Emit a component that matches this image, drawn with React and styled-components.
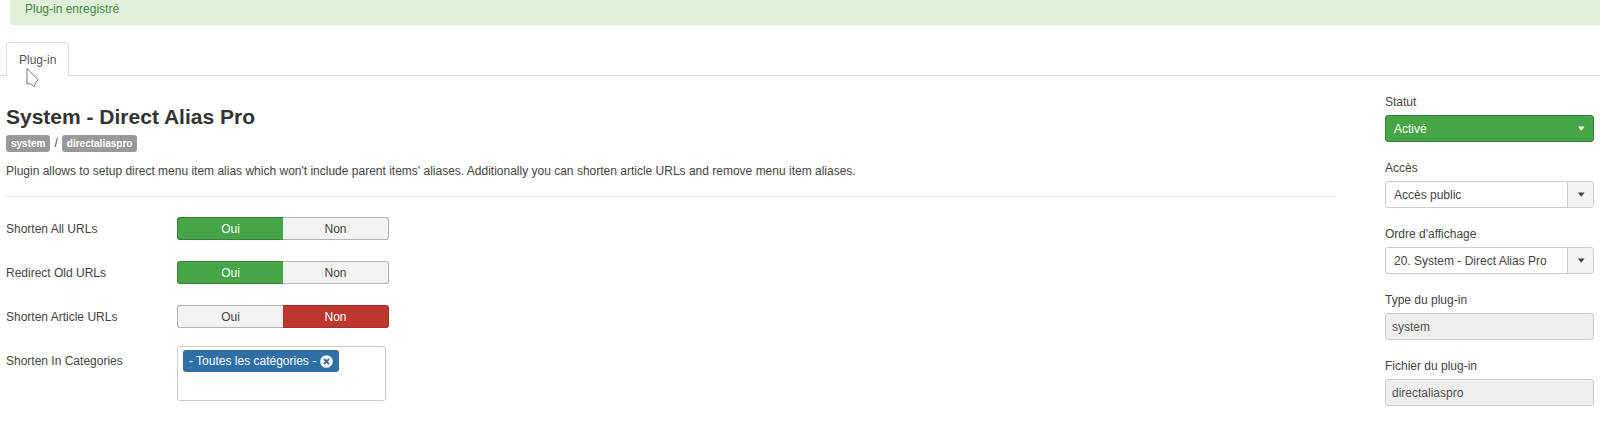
import React, { useState } from "react";
import styled, { createGlobalStyle, css } from "styled-components";

const RADIO_FIELDS = [
  { name: "shorten_all", label: "Shorten All URLs", value: "1" },
  { name: "redirect_old", label: "Redirect Old URLs", value: "1" },
  { name: "shorten_article", label: "Shorten Article URLs", value: "0" },
];

const YesNo = ({ name, label, value }) => {
  const [current, setCurrent] = useState(value);

  return (
    <Row as="fieldset">
      <RowLabel as="legend">{label}</RowLabel>
      <Toggle>
        <Option $active={current === "1"} $color="green">
          <Radio
            name={name}
            checked={current === "1"}
            onChange={() => setCurrent("1")}
          />
          Oui
        </Option>
        <Option $active={current === "0"} $color="red">
          <Radio
            name={name}
            checked={current === "0"}
            onChange={() => setCurrent("0")}
          />
          Non
        </Option>
      </Toggle>
    </Row>
  );
};

const SelectField = ({ id, label, options, green }) => (
  <Field>
    <FieldLabel htmlFor={id}>{label}</FieldLabel>
    <SelectWrapper>
      <Select id={id} $green={green}>
        {options.map((option) => (
          <option key={option}>{option}</option>
        ))}
      </Select>
      <Arrow $green={green}>
        <svg width="8" height="6" viewBox="0 0 8 6" aria-hidden="true">
          <path d="M1 0.500h6.500L4.500 4.500h-0.500z" fill="currentColor" />
        </svg>
      </Arrow>
    </SelectWrapper>
  </Field>
);

const TextField = ({ id, label, value }) => (
  <Field>
    <FieldLabel htmlFor={id}>{label}</FieldLabel>
    <TextInput id={id} value={value} readOnly />
  </Field>
);

const App = () => {
  const [categories, setCategories] = useState(["- Toutes les catégories -"]);

  return (
    <>
      <GlobalStyle />
      <Alert role="status">Plug-in enregistré</Alert>
      <Tabs>
        <Tab href="#general">Plug-in</Tab>
        <Pointer width="14" height="22" viewBox="0 0 14 22" aria-hidden="true">
          <path
            d="M1 1.500V17L4.500 16.800L8 19.800L9.800 15.800L12 12.800Z"
            fill="#fff"
            stroke="#777"
            strokeLinejoin="round"
          />
        </Pointer>
      </Tabs>
      <Content id="general">
        <Main>
          <Title>System - Direct Alias Pro</Title>
          <Badges>
            <Badge>system</Badge>
            <span>/</span>
            <Badge>directaliaspro</Badge>
          </Badges>
          <Description>
            Plugin allows to setup direct menu item alias which won't include
            parent items' aliases. Additionally you can shorten article URLs and
            remove menu item aliases.
          </Description>
          <Form>
            {RADIO_FIELDS.map((field) => (
              <YesNo key={field.name} {...field} />
            ))}
            <Row>
              <RowLabel htmlFor="categories">Shorten In Categories</RowLabel>
              <Choices>
                {categories.map((category) => (
                  <Chip key={category}>
                    {category}
                    <Remove
                      aria-label="Supprimer"
                      onClick={() =>
                        setCategories(categories.filter((c) => c !== category))
                      }
                    >
                      <svg width="13" height="13" viewBox="0 0 13 13">
                        <circle cx="6.5" cy="6.5" r="6.300" fill="#fff" />
                        <path
                          d="M4 4l5 5M9 4l-5 5"
                          stroke="#2f6fa7"
                          strokeWidth="2"
                        />
                      </svg>
                    </Remove>
                  </Chip>
                ))}
                <ChoiceInput id="categories" />
              </Choices>
            </Row>
          </Form>
        </Main>
        <Sidebar>
          <SelectField
            id="status"
            label="Statut"
            options={["Activé", "Désactivé"]}
            green
          />
          <SelectField id="access" label="Accès" options={["Accès public"]} />
          <SelectField
            id="ordering"
            label="Ordre d'affichage"
            options={["20. System - Direct Alias Pro"]}
          />
          <TextField id="folder" label="Type du plug-in" value="system" />
          <TextField
            id="element"
            label="Fichier du plug-in"
            value="directaliaspro"
          />
        </Sidebar>
      </Content>
    </>
  );
};

export default App;

const GlobalStyle = createGlobalStyle`
  * {
    box-sizing: border-box;
  }
  body {
    margin: 0;
    background-color: #fff;
    color: #444;
    font-family: "Liberation Sans", Arial, sans-serif;
    font-size: 12px;
    line-height: 18px;
  }
  input, select, button {
    font: inherit;
    color: inherit;
  }
`;

const Alert = styled.div`
  margin-left: 10px;
  padding: 0 15px 7px;
  background-color: #dff0d8;
  border-bottom-left-radius: 3px;
  color: #468847;
`;

const Tabs = styled.nav`
  position: relative;
  display: flex;
  margin-top: 17px;
  padding-left: 6px;
  border-bottom: 1px solid #ddd;
`;

const Tab = styled.a`
  margin-bottom: -1px;
  padding: 8px 12px 7px;
  background-color: #fff;
  border: 1px solid #ddd;
  border-bottom: 0;
  border-radius: 4px 4px 0 0;
  color: #555;
  text-decoration: none;
`;

const Pointer = styled.svg`
  position: absolute;
  top: 25px;
  left: 26px;
  pointer-events: none;
`;

const Content = styled.div`
  display: flex;
  gap: 49px;
  padding: 17px 6px 0;
`;

const Main = styled.main`
  flex: 1;
  min-width: 0;
`;

const Title = styled.h1`
  margin: 14px 0 7px;
  color: #333;
  font-size: 21px;
  font-weight: 700;
  line-height: 20px;
`;

const Badges = styled.div`
  display: flex;
  align-items: center;
  gap: 4px;
`;

const Badge = styled.span`
  padding: 2px 5px;
  background-color: #999;
  border-radius: 3px;
  color: #fff;
  font-size: 10px;
  font-weight: 700;
  line-height: 13px;
`;

const Description = styled.p`
  margin: 0;
  padding: 10px 0 16px;
  border-bottom: 1px solid #e8e8e8;
`;

const Form = styled.form`
  display: flex;
  flex-direction: column;
  gap: 18px;
  padding-top: 17px;
`;

const Row = styled.div`
  display: flex;
  align-items: flex-start;
  margin: 0;
  padding: 0;
  border: 0;
`;

const RowLabel = styled.label`
  float: left;
  width: 171px;
  padding: 6px 0 0;
`;

const Toggle = styled.div`
  display: flex;
  width: 212px;
  padding-top: 3px;
`;

const Radio = styled.input.attrs({ type: "radio" })`
  position: absolute;
  margin: 0;
  opacity: 0;
`;

const colors = {
  green: css`
    background-color: #46a546;
    border-color: #368136;
    color: #fff;
  `,
  red: css`
    background-color: #bd362f;
    border-color: #a52f29;
    color: #fff;
  `,
};

const Option = styled.label`
  flex: 1;
  height: 23px;
  background-color: #f3f3f3;
  border: 1px solid #b3b3b3;
  line-height: 22px;
  text-align: center;
  cursor: pointer;
  &:first-child {
    border-right: 0;
    border-radius: 3px 0 0 3px;
  }
  &:last-child {
    border-left: 0;
    border-radius: 0 3px 3px 0;
  }
  ${({ $active, $color }) => $active && colors[$color]}
`;

const Choices = styled.div`
  width: 209px;
  min-height: 55px;
  padding: 3px 5px;
  border: 1px solid #ccc;
  border-radius: 3px;
`;

const Chip = styled.span`
  display: inline-flex;
  align-items: center;
  gap: 4px;
  padding: 2px 6px;
  background-color: #2f6fa7;
  border-radius: 3px;
  color: #fff;
`;

const Remove = styled.button.attrs({ type: "button" })`
  display: flex;
  padding: 0;
  background: none;
  border: 0;
  cursor: pointer;
`;

const ChoiceInput = styled.input`
  display: block;
  width: 100%;
  height: 20px;
  padding: 0;
  background: none;
  border: 0;
  outline: 0;
`;

const Sidebar = styled.aside`
  display: flex;
  flex-direction: column;
  gap: 17px;
  width: 209px;
`;

const Field = styled.div`
  display: flex;
  flex-direction: column;
  gap: 4px;
`;

const FieldLabel = styled.label`
  display: block;
`;

const SelectWrapper = styled.div`
  position: relative;
`;

const Select = styled.select`
  display: block;
  appearance: none;
  width: 100%;
  height: 27px;
  padding: 0 28px 0 8px;
  background-color: #fff;
  border: 1px solid #ccc;
  border-radius: 3px;
  ${({ $green }) => $green && colors.green}
`;

const Arrow = styled.span`
  position: absolute;
  top: 1px;
  right: 1px;
  bottom: 1px;
  display: flex;
  align-items: center;
  justify-content: center;
  width: 26px;
  background-color: #f3f3f3;
  border-left: 1px solid #ccc;
  border-radius: 0 2px 2px 0;
  pointer-events: none;
  ${({ $green }) =>
    $green &&
    css`
      background-color: transparent;
      border-color: transparent;
      color: #fff;
    `}
`;

const TextInput = styled.input`
  width: 100%;
  height: 27px;
  padding: 0 6px;
  background-color: #eee;
  border: 1px solid #ccc;
  border-radius: 3px;
  color: #555;
`;
